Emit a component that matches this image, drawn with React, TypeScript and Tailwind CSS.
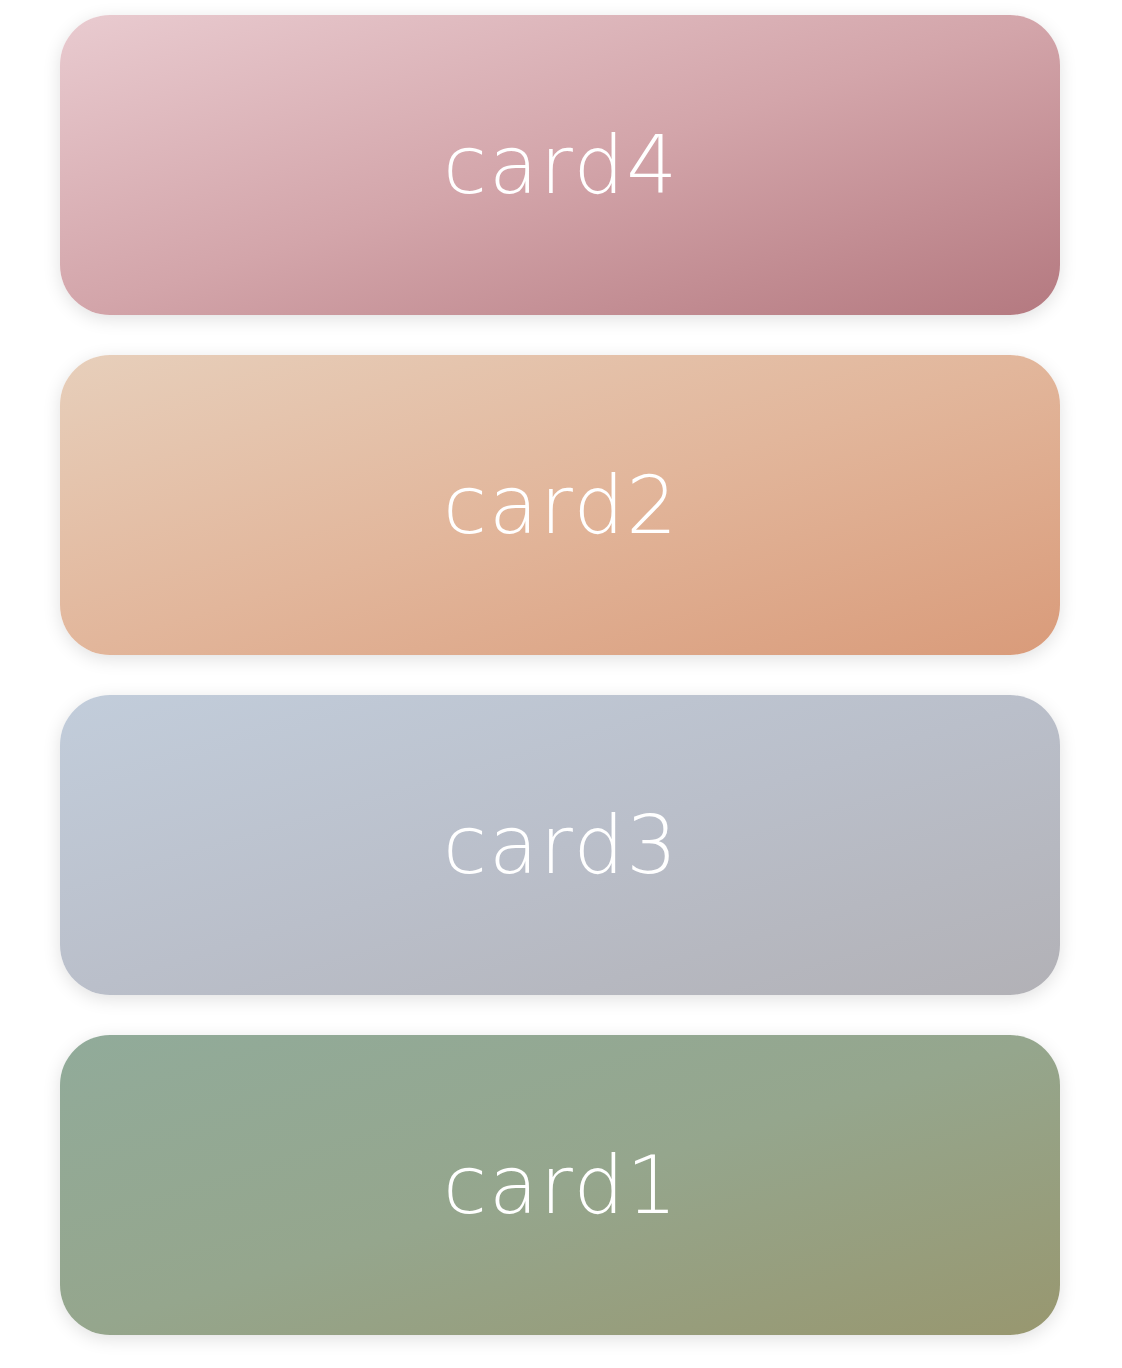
const cards = [
  { name: 'card4', bg: 'bg-gradient-to-br from-[#e9cbd0] via-[#d3a5aa] to-[#b47980]' },
  { name: 'card2', bg: 'bg-gradient-to-br from-[#e7cfbb] via-[#e2b69b] to-[#d99b7a]' },
  { name: 'card3', bg: 'bg-gradient-to-br from-[#c2cddb] via-[#babfca] to-[#b2b1b6]' },
  { name: 'card1', bg: 'bg-gradient-to-br from-[#91ab9a] via-[#95a68d] to-[#98976f]' },
]

export default function App() {
  return (
    <div className="min-h-screen bg-white pt-[15px] pb-[33px] pl-[60px] flex flex-col gap-10">
      {cards.map((c) => (
        <div
          key={c.name}
          className={`w-[1000px] h-[300px] rounded-[50px] flex items-center justify-center pt-[2px] shadow-[0_4px_18px_rgba(0,0,0,0.12)] ${c.bg}`}
        >
          <span className="text-white text-[80px] font-extralight tracking-[2px] pl-[2px] font-['DejaVu_Sans',_sans-serif] leading-none">
            {c.name}
          </span>
        </div>
      ))}
    </div>
  )
}
